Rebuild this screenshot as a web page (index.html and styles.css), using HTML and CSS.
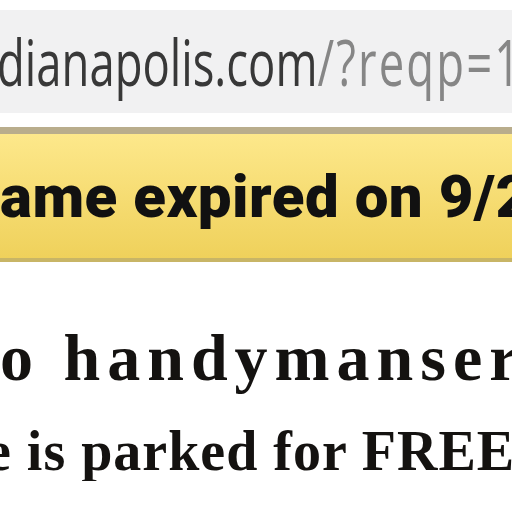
FILE: index.html
```html
<!DOCTYPE html>
<html lang="en">
<head>
    <meta charset="UTF-8">
    <title>Domain parked</title>
    <link rel="stylesheet" href="styles.css">
</head>
<body>
    <div class="addressArea">
        <div class="addressBar">
            <span class="addressText"><span class="host">dianapolis.com</span><span class="query">/?reqp=1</span></span>
        </div>
    </div>
    <div class="notice">
        <p class="noticeText">ame expired on 9/26/2019</p>
    </div>
    <div class="page">
        <h1 class="welcome">o handymanservices</h1>
        <h2 class="parked">e is parked for FREE</h2>
    </div>
</body>
</html>
```

FILE: styles.css
```css
body {
    margin: 0;
    background: #ffffff;
    overflow: hidden;
}

.addressArea {
    padding: 10px 0 14px;
}

.addressBar {
    height: 103px;
    background-color: #f1f1f2;
    display: flex;
    align-items: center;
    white-space: nowrap;
    overflow: hidden;
    font-family: 'Open Sans', 'Noto Sans', sans-serif;
    font-size: 64px;
}

.addressText {
    display: inline-block;
    margin-left: -3px;
    transform: scaleX(0.71);
    transform-origin: left center;
}

.host {
    color: #383838;
}

.query {
    color: #868686;
    letter-spacing: 3px;
}

.notice {
    border-top: 7px solid #b9ad8c;
    border-bottom: 4px solid #c8b566;
    height: 124px;
    background: linear-gradient(#fde88b, #efd15b);
    display: flex;
    align-items: center;
    overflow: hidden;
}

.noticeText {
    margin: 0;
    white-space: nowrap;
    font-family: 'Roboto', 'Lato', sans-serif;
    font-weight: 900;
    font-size: 60px;
    letter-spacing: 0.5px;
    color: #111111;
}

.page {
    padding-top: 56px;
    white-space: nowrap;
    overflow: hidden;
    font-family: 'Liberation Serif', 'Times New Roman', serif;
    color: #141210;
}

.welcome {
    margin: 0;
    font-size: 66px;
    letter-spacing: 7px;
    line-height: 1.2;
}

.parked {
    margin: 24px 0 0 -14px;
    font-size: 56px;
    letter-spacing: 1px;
    line-height: 60px;
}
```
